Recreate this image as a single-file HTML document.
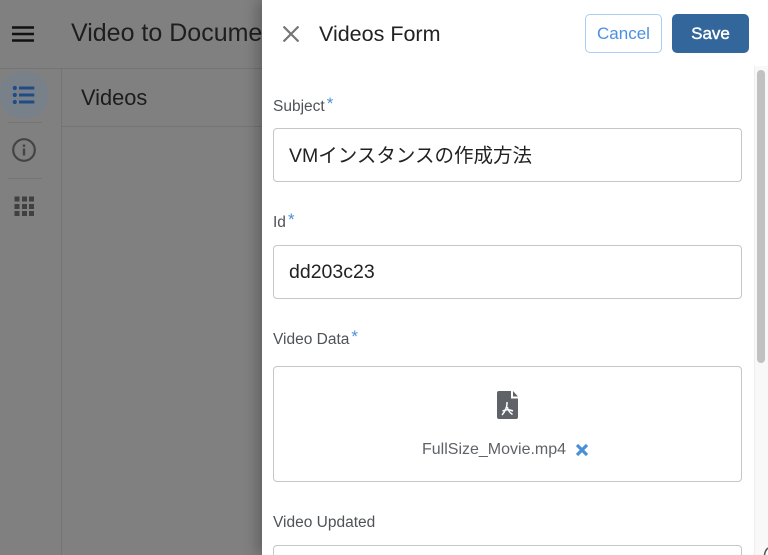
<!DOCTYPE html>
<html lang="ja">
<head>
<meta charset="utf-8">
<title>Videos Form</title>
<style>
html,body{margin:0;padding:0;width:768px;height:555px;overflow:hidden;background:#808080;font-family:"Liberation Sans","Noto Sans CJK JP",sans-serif}
*{box-sizing:border-box}
.a{position:absolute;white-space:nowrap}
.line{position:absolute;background:#747474}
.panel{position:absolute;left:262px;top:0;width:506px;height:555px;background:#fff;box-shadow:-6px 0 12px rgba(0,0,0,.22);overflow:hidden}
.label{position:absolute;left:11px;font-size:15.5px;line-height:18px;color:#4f5357;white-space:nowrap}
.label i{font-style:normal;color:#4a90d9;font-size:17px;position:relative;top:-2px;margin-left:2px}
.box{position:absolute;left:11px;width:469px;border:1px solid #c4c6c9;border-radius:4px;background:#fff}
.val{position:absolute;left:15px;top:0;font-size:19.5px;color:#222;white-space:nowrap}
svg{position:absolute;display:block}
</style>
</head>
<body>
<div class="line" style="left:0;top:68px;width:262px;height:1px"></div>
<div class="line" style="left:61px;top:69px;width:1px;height:486px"></div>
<div class="line" style="left:62px;top:126px;width:200px;height:1px"></div>

<svg style="left:12px;top:26px" width="23" height="16" viewBox="0 0 23 16"><path d="M0 1.500h22M0 8h22M0 14.500h22" stroke="#111" stroke-width="2.600" fill="none"/></svg>
<div class="a" style="left:71px;top:17px;font-size:25px;line-height:32px;color:#1e1e1e;width:191px;overflow:hidden">Video to Document</div>

<div class="a" style="left:-1px;top:71px;width:50px;height:48px;border-radius:50%;background:#78818a"></div>
<svg style="left:12px;top:85px" width="24" height="20" viewBox="0 0 24 20"><g fill="#1f4c85"><circle cx="2.800" cy="3" r="2.100"/><circle cx="2.800" cy="10" r="2.100"/><circle cx="2.800" cy="17" r="2.100"/><rect x="7" y="1.500" width="15.300" height="3"/><rect x="7" y="8.500" width="15.300" height="3"/><rect x="7" y="15.500" width="15.300" height="3"/></g></svg>
<div class="line" style="left:8px;top:122px;width:34px;height:1px"></div>
<svg style="left:12px;top:138px" width="24" height="24" viewBox="0 0 24 24"><circle cx="12" cy="12" r="10.800" fill="none" stroke="#444" stroke-width="2.200"/><rect x="10.800" y="10.500" width="2.400" height="7" fill="#444"/><rect x="10.800" y="6.500" width="2.400" height="2.400" fill="#444"/></svg>
<div class="line" style="left:8px;top:178px;width:34px;height:1px"></div>
<svg style="left:14px;top:196px" width="21" height="21" viewBox="0 0 21 21"><g fill="#404040"><rect x="0.500" y="0.500" width="5" height="5"/><rect x="8" y="0.500" width="5" height="5"/><rect x="15" y="0.500" width="5" height="5"/><rect x="0.500" y="8" width="5" height="5"/><rect x="8" y="8" width="5" height="5"/><rect x="15" y="8" width="5" height="5"/><rect x="0.500" y="15" width="5" height="5"/><rect x="8" y="15" width="5" height="5"/><rect x="15" y="15" width="5" height="5"/></g></svg>
<div class="a" style="left:81px;top:84px;font-size:21.800px;line-height:28px;color:#1c1c1c">Videos</div>

<div class="panel">
  <svg style="left:21px;top:26px" width="16" height="16" viewBox="0 0 16 16"><path d="M0.500 0.500L15.500 15.500M15.500 0.500L0.500 15.500" stroke="#757575" stroke-width="2.200" fill="none"/></svg>
  <div class="a" style="left:57px;top:20px;font-size:21.500px;line-height:28px;color:#222">Videos Form</div>

  <div class="a" style="left:323px;top:14px;width:77px;height:39px;border:1px solid #a9cdf3;border-radius:5px;background:#fff;color:#4a90e2;font-size:17px;line-height:37px;text-align:center">Cancel</div>
  <div class="a" style="left:410px;top:14px;width:77px;height:39px;border-radius:5px;background:#33669b;color:#fff;font-size:17px;-webkit-text-stroke:0.4px #fff;line-height:39px;text-align:center">Save</div>

  <div class="a" style="left:492px;top:66px;width:14px;height:489px;background:#f8f8f8;border-left:1px solid #eee"></div>
  <div class="a" style="left:495px;top:70px;width:8px;height:293px;border-radius:4px;background:#c1c1c1"></div>
  <svg style="left:501px;top:547px" width="5" height="8" viewBox="0 0 5 8"><path d="M5 1Q2 3.500 1.500 8" stroke="#555" stroke-width="1.500" fill="none"/></svg>

  <div class="label" style="top:97px">Subject<i>*</i></div>
  <div class="box" style="top:128px;height:54px"><div class="val" style="top:1px;line-height:52px">VMインスタンスの作成方法</div></div>

  <div class="label" style="top:213px">Id<i>*</i></div>
  <div class="box" style="top:245px;height:54px"><div class="val" style="line-height:52px">dd203c23</div></div>

  <div class="label" style="top:330px">Video Data<i>*</i></div>
  <div class="box" style="top:366px;height:116px"></div>
  <svg style="left:235px;top:391px" width="21" height="28" viewBox="0 0 21 28"><path d="M2 0H14V7.500H21V26A2 2 0 0 1 19 28H2A2 2 0 0 1 0 26V2A2 2 0 0 1 2 0Z" fill="#5f6368"/><path d="M16 0L21 5.500H16Z" fill="#5f6368"/><path d="M10 11C10.300 15.500 8.500 20 5 24M5.500 20C8.500 18.500 12.500 18.500 16 20M10.300 16C11 19 13 22 15.500 23.500" fill="none" stroke="#fff" stroke-width="1.500"/></svg>
  <div class="a" style="left:160px;top:440px;font-size:16px;line-height:19px;color:#5f6368">FullSize_Movie.mp4</div>
  <svg style="left:314px;top:444px" width="12" height="12" viewBox="0 0 12 12"><path d="M1 1L11 11M11 1L1 11" stroke="#4a90d9" stroke-width="3.200" fill="none"/></svg>

  <div class="label" style="top:514px">Video Updated</div>
  <div class="a" style="left:11px;top:545px;width:469px;height:10px;border:1px solid #c4c6c9;border-bottom:0;border-radius:4px 4px 0 0;background:#fff"></div>
</div>
</body>
</html>
